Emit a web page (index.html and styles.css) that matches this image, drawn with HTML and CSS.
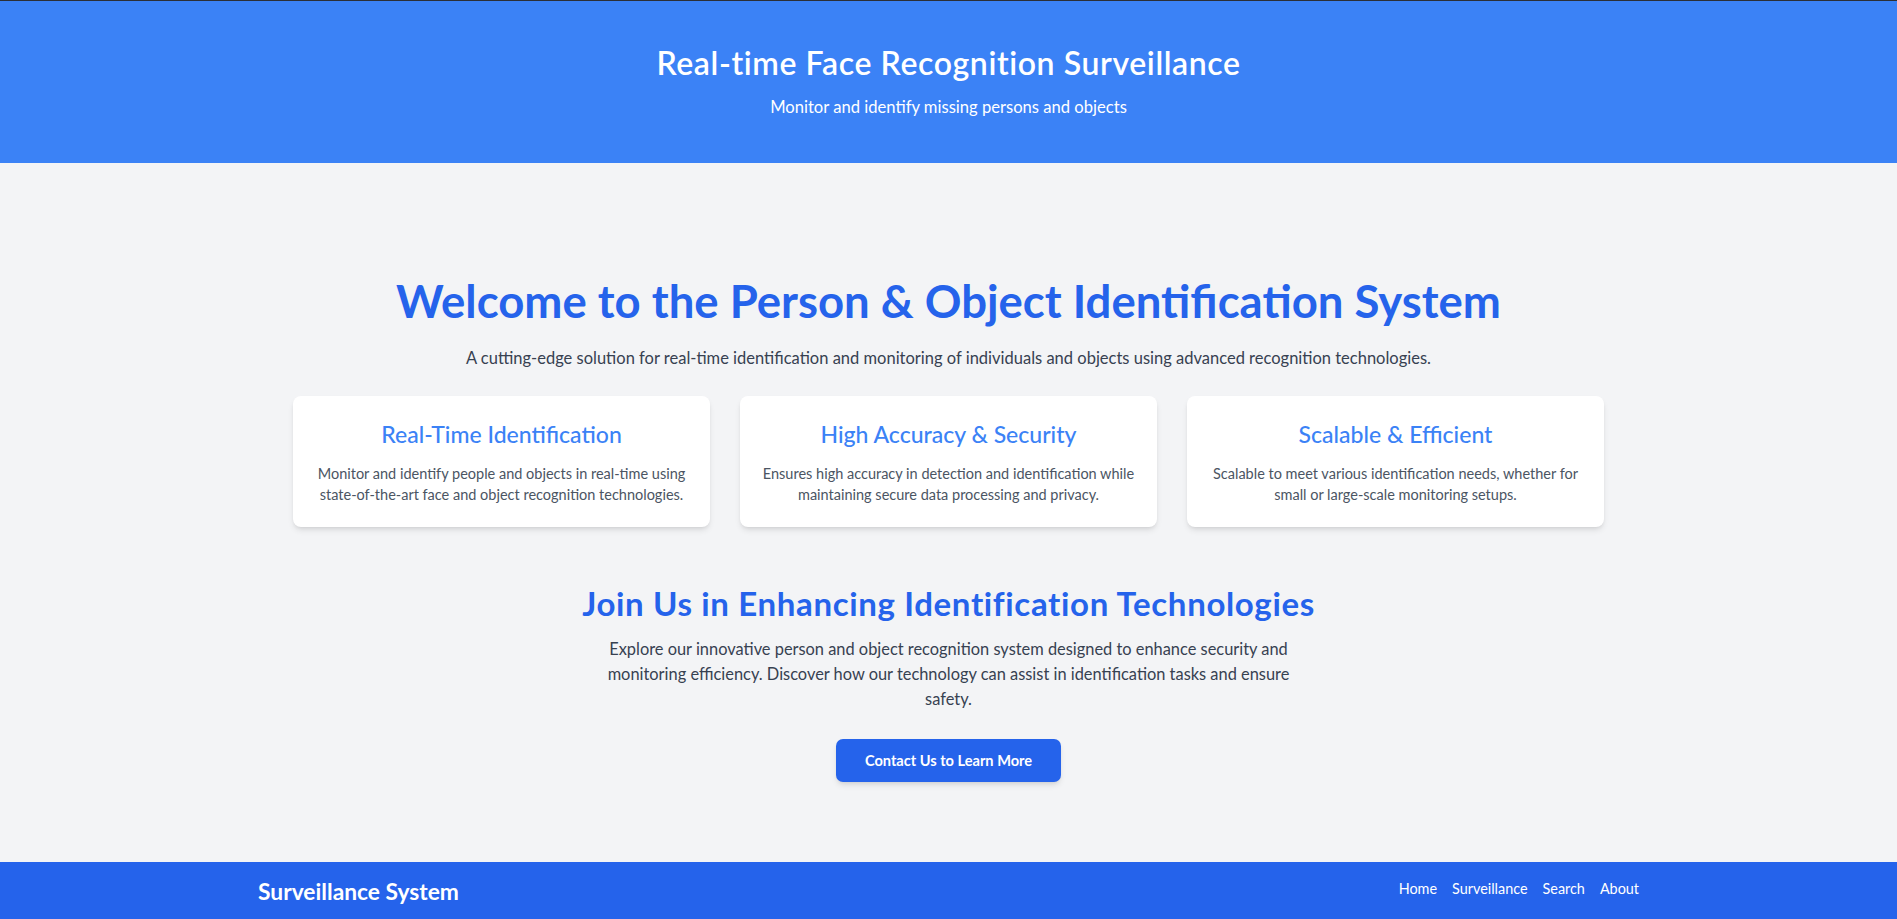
FILE: index.html
```html
<!DOCTYPE html>
<html lang="en">
<head>
<meta charset="utf-8">
<title>Real-time Face Recognition Surveillance</title>
<link rel="stylesheet" href="styles.css">
</head>
<body>
  <header class="hero">
    <h1 class="hero-title">Real-time Face Recognition Surveillance</h1>
    <p class="hero-sub">Monitor and identify missing persons and objects</p>
  </header>

  <main class="main">
    <section class="welcome">
      <h2 class="welcome-title">Welcome to the Person &amp; Object Identification System</h2>
      <p class="welcome-sub">A cutting-edge solution for real-time identification and monitoring of individuals and objects using advanced recognition technologies.</p>

      <div class="cards">
        <div class="card">
          <h3 class="card-title">Real-Time Identification</h3>
          <p class="card-text">Monitor and identify people and objects in real-time using state-of-the-art face and object recognition technologies.</p>
        </div>
        <div class="card">
          <h3 class="card-title">High Accuracy &amp; Security</h3>
          <p class="card-text">Ensures high accuracy in detection and identification while maintaining secure data processing and privacy.</p>
        </div>
        <div class="card">
          <h3 class="card-title">Scalable &amp; Efficient</h3>
          <p class="card-text">Scalable to meet various identification needs, whether for small or large-scale monitoring setups.</p>
        </div>
      </div>
    </section>

    <section class="join">
      <h2 class="join-title">Join Us in Enhancing Identification Technologies</h2>
      <p class="join-text">Explore our innovative person and object recognition system designed to enhance security and monitoring efficiency. Discover how our technology can assist in identification tasks and ensure safety.</p>
      <a class="btn" href="#">Contact Us to Learn More</a>
    </section>
  </main>

  <footer class="footer">
    <div class="footer-inner">
      <div class="brand">Surveillance System</div>
      <nav class="nav">
        <a href="#">Home</a>
        <a href="#">Surveillance</a>
        <a href="#">Search</a>
        <a href="#">About</a>
      </nav>
    </div>
  </footer>
</body>
</html>
```

FILE: styles.css
```css
* { box-sizing: border-box; }

html, body {
  margin: 0;
  padding: 0;
}

body {
  font-family: "Lato", "Open Sans", "Noto Sans", sans-serif;
  background: #f3f4f6;
  color: #374151;
}

h1, h2, h3, p { margin: 0; }

.hero {
  background: #3b82f6;
  color: #ffffff;
  text-align: center;
  padding: 44px 0 44px;
  border-top: 1px solid #2b2f36;
}

.hero-title {
  font-size: 32px;
  line-height: 35px;
  font-weight: 600;
  letter-spacing: 0.6px;
}

.hero-sub {
  margin-top: 15px;
  font-size: 16.6px;
  line-height: 24px;
}

.main {
  padding: 115px 0 80px;
}

.welcome {
  text-align: center;
}

.welcome-title {
  font-size: 45.5px;
  line-height: 46px;
  font-weight: 700;
  color: #2563eb;
}

.welcome-sub {
  margin-top: 22px;
  font-size: 16.5px;
  line-height: 24px;
  color: #374151;
}

.cards {
  width: 1311px;
  margin: 26px auto 0;
  display: grid;
  grid-template-columns: repeat(3, 1fr);
  gap: 30px;
}

.card {
  background: #ffffff;
  border-radius: 8px;
  box-shadow: 0 4px 6px -1px rgba(0,0,0,0.1), 0 2px 4px -2px rgba(0,0,0,0.1);
  padding: 22px 17px 22px;
  text-align: center;
  min-height: 130px;
}

.card-title {
  font-size: 23px;
  line-height: 32px;
  font-weight: 500;
  color: #3b82f6;
}

.card-text {
  margin-top: 13px;
  font-size: 14.5px;
  line-height: 21px;
  color: #4b5563;
}

.join {
  margin-top: 58px;
  text-align: center;
}

.join-title {
  font-size: 33px;
  line-height: 36px;
  font-weight: 700;
  letter-spacing: 0.65px;
  color: #2563eb;
}

.join-text {
  max-width: 700px;
  margin: 15px auto 0;
  font-size: 16.4px;
  line-height: 25px;
  color: #374151;
}

.btn {
  display: inline-block;
  margin-top: 28px;
  height: 43px;
  line-height: 43px;
  padding: 0 29px;
  background: #2563eb;
  color: #ffffff;
  font-size: 14.6px;
  font-weight: 700;
  text-decoration: none;
  border-radius: 7px;
  box-shadow: 0 4px 6px -1px rgba(0,0,0,0.1), 0 2px 4px -2px rgba(0,0,0,0.1);
}

.footer {
  background: #2563eb;
  color: #ffffff;
  padding: 15px 0 16px;
}

.footer-inner {
  max-width: 1381px;
  margin: 0 auto;
  display: flex;
  justify-content: space-between;
  align-items: flex-start;
}

.brand {
  font-size: 22.8px;
  line-height: 28px;
  font-weight: 700;
}

.nav {
  display: flex;
  gap: 15px;
  margin-top: 2px;
}

.nav a {
  color: #ffffff;
  text-decoration: none;
  font-size: 14.4px;
  line-height: 20px;
}
```
